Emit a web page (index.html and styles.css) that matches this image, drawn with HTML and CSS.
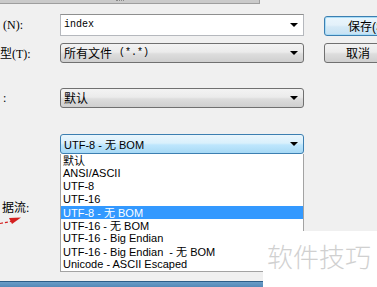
FILE: index.html
```html
<!DOCTYPE html>
<html lang="zh">
<head>
<meta charset="utf-8">
<link rel="stylesheet" href="styles.css">
</head>
<body>
<div class="dialog">
  <div class="topbar"><span class="grip"></span></div>

  <div class="row row-name">
    <span class="label">(N):</span>
    <div class="combo combo-input"><span class="mono">index</span><i class="arrow"></i></div>
    <div class="btn btn-default">保存<span class="lat">(S)</span></div>
  </div>

  <div class="row row-type">
    <span class="label"><span class="cjk">型</span>(T):</span>
    <div class="combo"><span class="cjk">所有文件</span><span class="mono gap">(*.*)</span><i class="arrow"></i></div>
    <div class="btn">取消</div>
  </div>

  <div class="row row-enc">
    <span class="label">:</span>
    <div class="combo"><span class="cjk">默认</span><i class="arrow"></i></div>
  </div>

  <div class="row row-bom">
    <span class="label"></span>
    <div class="dropwrap">
      <div class="combo combo-open"><span class="sans">UTF-8 - <span class="cjk">无</span> BOM</span><i class="arrow"></i></div>
      <ul class="droplist">
        <li><span class="cjk">默认</span></li>
        <li>ANSI/ASCII</li>
        <li>UTF-8</li>
        <li>UTF-16</li>
        <li class="sel">UTF-8 - <span class="cjk">无</span> BOM</li>
        <li>UTF-16 - <span class="cjk">无</span> BOM</li>
        <li>UTF-16 - Big Endian</li>
        <li>UTF-16 - Big Endian&nbsp; - <span class="cjk">无</span> BOM</li>
        <li>Unicode - ASCII Escaped</li>
      </ul>
    </div>
  </div>

  <div class="stream"><span class="cjk">据流</span>:</div>
  <svg class="redarrow" width="22" height="12" viewBox="0 0 22 12">
    <path d="M0 9.5 L11 7.5" stroke="#d42020" stroke-width="1.2" stroke-dasharray="3 2" fill="none"/>
    <path d="M9 4 L21 3.5 L12 10 Z" fill="#d42020"/>
  </svg>

  <div class="bottomband"></div>
</div>
<div class="watermark">软件技巧</div>
</body>
</html>
```
FILE: styles.css
```css
html, body {
  margin: 0;
  padding: 0;
}
body {
  width: 377px;
  height: 287px;
  overflow: hidden;
  position: relative;
  background: #f0f0f0;
  font-family: "Liberation Serif", "Noto Sans CJK SC", serif;
  font-size: 12px;
  color: #000;
}
.dialog {
  display: flex;
  flex-direction: column;
  height: 287px;
}
.cjk {
  font-family: "Noto Sans CJK SC", sans-serif;
}
.lat {
  font-family: "Liberation Sans", sans-serif;
}
.mono {
  font-family: "Liberation Mono", "Noto Sans CJK SC", monospace;
  font-size: 10px;
}
.gap {
  margin-left: 7px;
}
.sans {
  font-family: "Liberation Sans", "Noto Sans CJK SC", sans-serif;
  font-size: 11px;
}
.topbar {
  width: 259px;
  height: 3px;
  background: #cacaca;
  border-bottom: 1px solid #9e9e9e;
  border-right: 1px solid #9e9e9e;
  box-sizing: content-box;
  display: flex;
  justify-content: center;
}
.grip {
  width: 8px;
  height: 2px;
  margin-left: -20px;
  border-top: 1px dotted #8a8a8a;
}
.row {
  display: grid;
  grid-template-columns: 60px 244px 88px;
  column-gap: 0;
  align-items: start;
}
.label {
  font-family: "Liberation Serif", "Noto Sans CJK SC", serif;
  font-size: 12px;
  line-height: 14px;
  padding-left: 3px;
  align-self: center;
  white-space: nowrap;
}
.row-type .label {
  padding-left: 0;
}
.row-name {
  margin-top: 10px;
  height: 22px;
}
.row-type {
  margin-top: 7px;
  height: 20px;
}
.row-enc {
  margin-top: 25px;
  height: 20px;
}
.row-bom {
  margin-top: 26px;
  height: 20px;
}
.combo {
  box-sizing: border-box;
  height: 20px;
  border: 1px solid #707070;
  border-radius: 3px;
  background: linear-gradient(#f3f3f3 0%, #ebebeb 45%, #dddddd 55%, #cfcfcf 100%);
  display: flex;
  align-items: center;
  padding: 0 4px 0 3px;
  white-space: pre;
  line-height: 14px;
}
.combo .arrow {
  margin-left: auto;
}
.combo-input {
  height: 22px;
  border-radius: 0;
  border: 1px solid #b5b8bd;
  border-top-color: #8e8f8f;
  background: #fff;
}
.combo-open {
  border-color: #3c7fb1;
  background: linear-gradient(#eaf6fd 0%, #d9f0fc 45%, #bee6fd 55%, #a7d9f5 100%);
}
.arrow {
  width: 0;
  height: 0;
  border-left: 4px solid transparent;
  border-right: 4px solid transparent;
  border-top: 4px solid #000;
  margin-right: 1px;
}
.btn {
  box-sizing: border-box;
  margin-left: 20px;
  height: 20px;
  border: 1px solid #707070;
  border-radius: 3px;
  background: linear-gradient(#f2f2f2 0%, #ebebeb 45%, #dddddd 55%, #cfcfcf 100%);
  font-family: "Noto Sans CJK SC", sans-serif;
  font-size: 12px;
  line-height: 18px;
  text-align: center;
  white-space: nowrap;
}
.btn-default {
  margin-top: 2px;
  padding-left: 20px;
  border-color: #3c7fb1;
  box-shadow: inset 0 0 0 1px #a9dcf6;
  background: linear-gradient(#eaf6fd 0%, #e3f1fa 45%, #d4e9f6 55%, #c6e1f3 100%);
}
.dropwrap {
  position: relative;
}
.droplist {
  position: absolute;
  top: 100%;
  left: 0;
  right: 0;
  margin: 0;
  padding: 0;
  list-style: none;
  background: #fff;
  border: 1px solid #a3a3a3;
  border-top: 0;
  font-family: "Liberation Sans", "Noto Sans CJK SC", sans-serif;
  font-size: 11px;
  z-index: 2;
}
.droplist li {
  height: 13px;
  line-height: 13px;
  padding-left: 2px;
  white-space: nowrap;
}
.droplist .sel {
  background: #3399ff;
  color: #fff;
}
.stream {
  margin-top: 46px;
  padding-left: 2px;
  height: 14px;
  line-height: 14px;
  font-size: 12px;
}
.redarrow {
  display: block;
  margin-top: 0;
}
.bottomband {
  margin-top: auto;
  height: 5px;
  border-top: 1px solid #2c5d88;
  background: linear-gradient(#6a9dc8, #5389b8);
}
.watermark {
  position: absolute;
  left: 263px;
  top: 231px;
  width: 114px;
  height: 56px;
  background: #fff;
  color: #d0d0d0;
  font-family: "Noto Sans CJK SC", sans-serif;
  font-weight: 300;
  font-size: 26px;
  line-height: 30px;
  padding: 10px 0 0 4px;
  box-sizing: border-box;
  white-space: nowrap;
  z-index: 3;
}
```
